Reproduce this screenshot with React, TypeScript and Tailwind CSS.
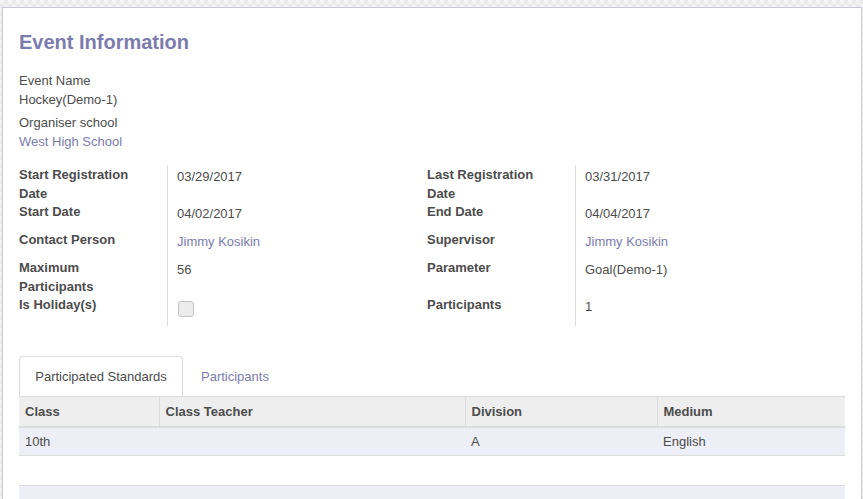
import React from 'react'

type Field = { label: string; value: React.ReactNode; link?: boolean }

const left: Field[] = [
  { label: 'Start Registration Date', value: '03/29/2017' },
  { label: 'Start Date', value: '04/02/2017' },
  { label: 'Contact Person', value: 'Jimmy Kosikin', link: true },
  { label: 'Maximum Participants', value: '56' },
  { label: 'Is Holiday(s)', value: <span className="mt-[4px] ml-[1px] block h-[16px] w-[16px] rounded-[3px] border border-[#c4c4c4] bg-[#ececec]" /> },
]

const right: Field[] = [
  { label: 'Last Registration Date', value: '03/31/2017' },
  { label: 'End Date', value: '04/04/2017' },
  { label: 'Supervisor', value: 'Jimmy Kosikin', link: true },
  { label: 'Parameter', value: 'Goal(Demo-1)' },
  { label: 'Participants', value: '1' },
]

// row heights so both groups line up like the form view
const rowHeights = ['h-[37px]', 'h-[28px]', 'h-[28px]', 'h-[37px]', 'h-[31px]']

function Group({ fields }: { fields: Field[] }) {
  return (
    <div className="flex w-[408px]">
      <div className="w-[149px] border-r border-[#dddddd] pr-[24px]">
        {fields.map((f, i) => (
          <div key={f.label} className={`${rowHeights[i]} font-bold leading-[19px] text-[#4c4c4c]`}>
            {f.label}
          </div>
        ))}
      </div>
      <div className="flex-1 pl-[9px]">
        {fields.map((f, i) => (
          <div
            key={f.label}
            className={`${rowHeights[i]} pt-[2px] leading-[19px] ${f.link ? 'text-[#7c7bad]' : 'text-[#4c4c4c]'}`}
          >
            {f.value}
          </div>
        ))}
      </div>
    </div>
  )
}

export default function App() {
  return (
    <div
      className="h-[499px] w-[863px] overflow-hidden bg-[#f4f4f4] pl-[2px] pt-[7px] text-[13px] text-[#4c4c4c]"
      style={{
        fontFamily: '"Liberation Sans", Arial, sans-serif',
        backgroundImage:
          'linear-gradient(45deg, #e9e9e9 25%, transparent 25%, transparent 75%, #e9e9e9 75%), linear-gradient(45deg, #e9e9e9 25%, transparent 25%, transparent 75%, #e9e9e9 75%)',
        backgroundSize: '8px 8px',
        backgroundPosition: '0 0, 4px 4px',
      }}
    >
      <div className="h-[600px] w-[860px] border border-[#c8c8d0] bg-white pl-[16px] pr-[15px] pt-[22px]">
        <h1 className="text-[20px] font-bold leading-[24px] text-[#7c7bad]">Event Information</h1>

        <div className="mt-[17px] leading-[19px]">
          <div>Event Name</div>
          <div>Hockey(Demo-1)</div>
          <div className="mt-[4px]">Organiser school</div>
          <div className="text-[#7c7bad]">West High School</div>
        </div>

        <div className="mt-[14px] flex">
          <Group fields={left} />
          <Group fields={right} />
        </div>

        <div className="mt-[30px]">
          <div className="flex h-[40px] items-stretch">
            <div className="flex w-[164px] items-center justify-center rounded-t-[4px] border border-b-0 border-[#dddddd] bg-white pt-[1px] text-[#4c4c4c]">
              Participated Standards
            </div>
            <div className="flex items-center px-[18px] pt-[1px] text-[#7c7bad]">Participants</div>
          </div>
          <table className="w-[826px] border-collapse text-left">
            <thead>
              <tr className="h-[30px] border-t border-b-2 border-[#dcdcdc] bg-[#eeeeee] font-bold">
                <th className="w-[140px] border-r border-[#dcdcdc] px-[6px]">Class</th>
                <th className="w-[306px] border-r border-[#dcdcdc] px-[6px]">Class Teacher</th>
                <th className="w-[192px] border-r border-[#dcdcdc] px-[6px]">Division</th>
                <th className="px-[6px]">Medium</th>
              </tr>
            </thead>
            <tbody>
              <tr className="h-[29px] border-b border-[#dcdcdc] bg-[#eeeef6]">
                <td className="px-[6px]">10th</td>
                <td className="px-[6px]"></td>
                <td className="px-[6px]">A</td>
                <td className="px-[6px]">English</td>
              </tr>
              <tr className="h-[30px]">
                <td colSpan={4}></td>
              </tr>
              <tr className="h-[29px] border-t border-[#dcdcdc] bg-[#eeeef6]">
                <td colSpan={4}></td>
              </tr>
            </tbody>
          </table>
        </div>
      </div>
    </div>
  )
}
